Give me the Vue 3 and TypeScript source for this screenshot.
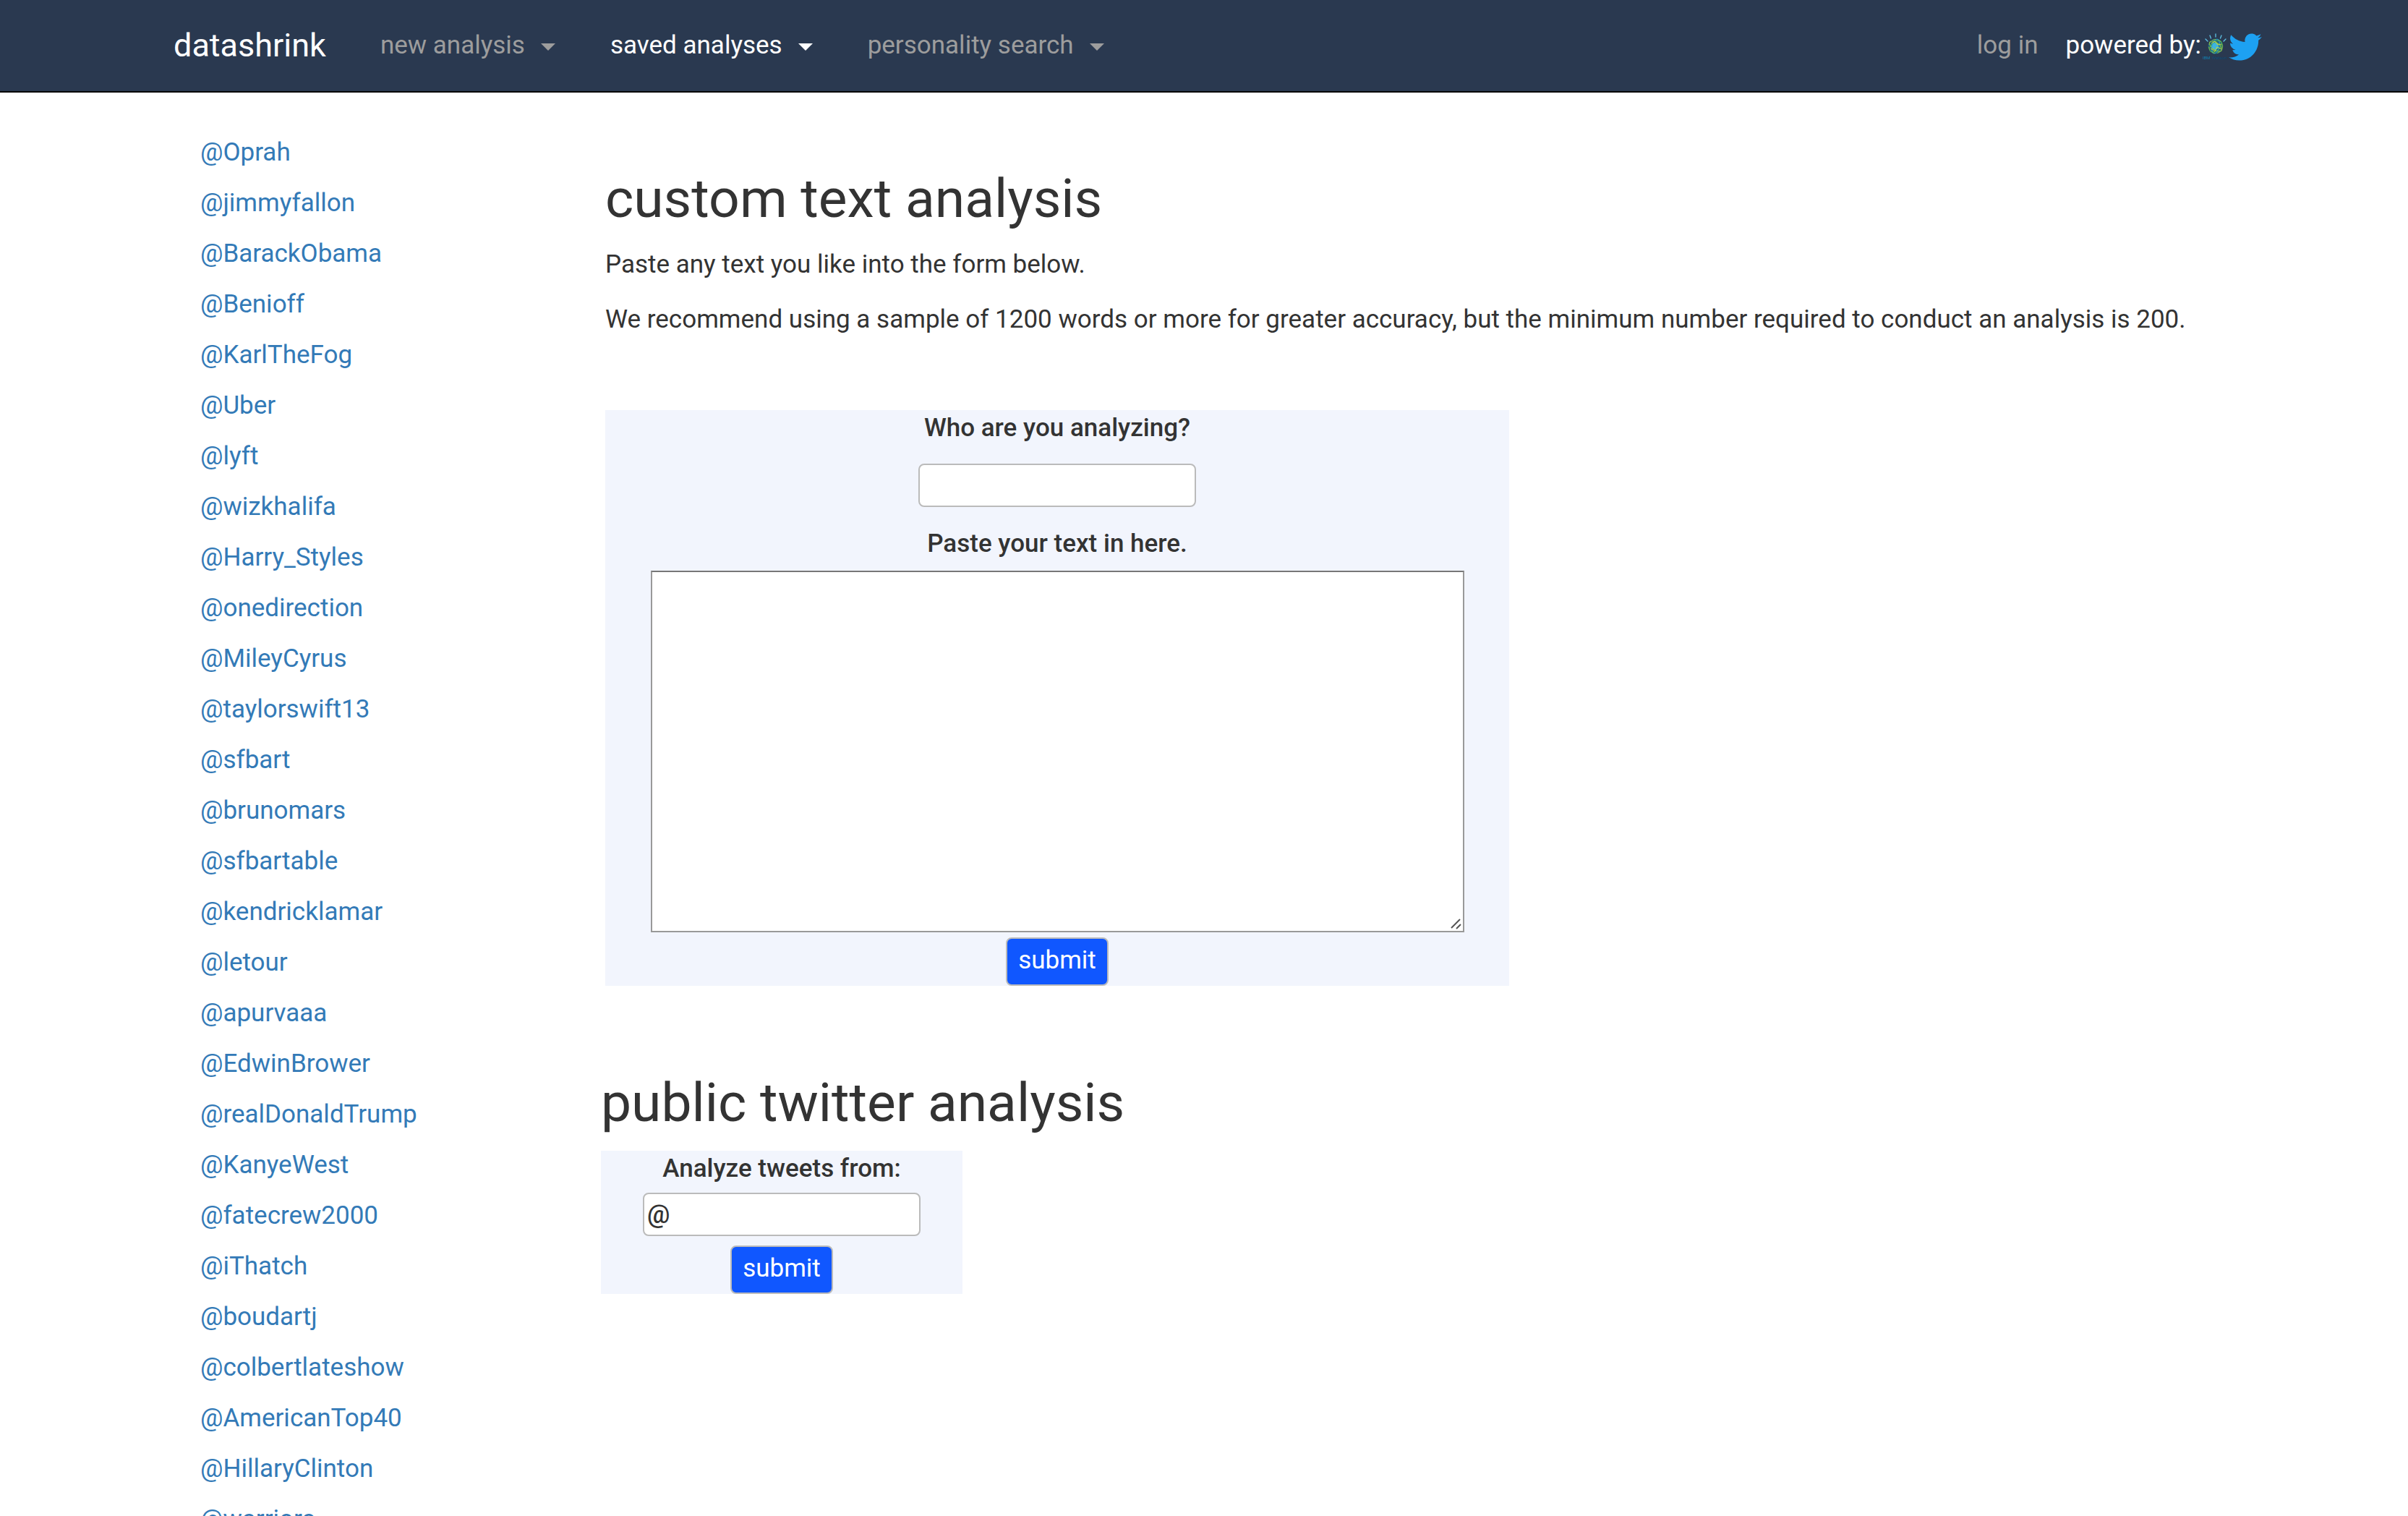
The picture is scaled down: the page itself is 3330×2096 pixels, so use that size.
<script setup lang="ts">
import { ref } from 'vue'

interface NavItem {
  label: string
  active: boolean
}

const navItems: NavItem[] = [
  { label: 'new analysis', active: false },
  { label: 'saved analyses', active: true },
  { label: 'personality search', active: false },
]

const handles: string[] = [
  'Oprah', 'jimmyfallon', 'BarackObama', 'Benioff', 'KarlTheFog', 'Uber', 'lyft',
  'wizkhalifa', 'Harry_Styles', 'onedirection', 'MileyCyrus', 'taylorswift13',
  'sfbart', 'brunomars', 'sfbartable', 'kendricklamar', 'letour', 'apurvaaa',
  'EdwinBrower', 'realDonaldTrump', 'KanyeWest', 'fatecrew2000', 'iThatch',
  'boudartj', 'colbertlateshow', 'AmericanTop40', 'HillaryClinton', 'warriors',
]

const subject = ref('')
const sample = ref('')
const handle = ref('@')
</script>

<template>
  <div class="page">
    <header class="navbar">
      <a class="brand" href="#">datashrink</a>
      <nav class="menu">
        <a
          v-for="item in navItems"
          :key="item.label"
          href="#"
          class="nav-link"
          :class="{ active: item.active }"
        >{{ item.label }}<span class="caret"></span></a>
      </nav>
      <div class="session">
        <a class="nav-link" href="#">log in</a>
        <div class="powered">
          <span>powered by:</span>
          <svg class="watson" viewBox="0 0 36 38" aria-hidden="true">
            <g stroke="#5fc3e6" stroke-width="1.3" stroke-linecap="round">
              <path d="M4 8l3 3M10 3l1.500 4M18 1v4M26 3l-1.500 4M32 8l-3 3" />
            </g>
            <circle cx="18" cy="18" r="10.500" fill="#1f5f7c" />
            <circle cx="17" cy="18" r="5" fill="#3fb4dc" />
            <g fill="none" stroke-width="1">
              <ellipse cx="18" cy="18" rx="10" ry="5" stroke="#a6ce39" transform="rotate(35 18 18)" />
              <ellipse cx="18" cy="18" rx="10" ry="6" stroke="#4fae4e" transform="rotate(-40 18 18)" />
              <ellipse cx="18" cy="18" rx="5" ry="10" stroke="#2a9fd0" transform="rotate(15 18 18)" />
              <circle cx="18" cy="18" r="9.500" stroke="#7fb83f" stroke-dasharray="5 3" />
              <path d="M12 14l5-3 4 5 5-1M11 21l6 4 3-6 6 3" stroke="#c9dc3a" />
            </g>
            <text x="0" y="36" font-size="6" fill="#0f7fae">IBM</text>
            <text x="13" y="36" font-size="6" fill="#0c4a74">Watson</text>
          </svg>
          <svg class="twitter" viewBox="0 2 24 20" aria-hidden="true">
            <path fill="#1da1f2" d="M23.953 4.570a10 10 0 0 1-2.825.775 4.958 4.958 0 0 0 2.163-2.723c-.951.555-2.005.959-3.127 1.184a4.920 4.920 0 0 0-8.384 4.482C7.690 8.095 4.067 6.130 1.640 3.162a4.822 4.822 0 0 0-.666 2.475c0 1.710.870 3.213 2.188 4.096a4.904 4.904 0 0 1-2.228-.616v.060a4.923 4.923 0 0 0 3.946 4.827 4.996 4.996 0 0 1-2.212.085 4.936 4.936 0 0 0 4.604 3.417 9.867 9.867 0 0 1-6.102 2.105c-.390 0-.779-.023-1.170-.067a13.995 13.995 0 0 0 7.557 2.209c9.053 0 13.998-7.496 13.998-13.985 0-.210 0-.420-.015-.630A9.935 9.935 0 0 0 24 4.590z" />
          </svg>
        </div>
      </div>
    </header>

    <div class="content">
      <ul class="handles">
        <li v-for="name in handles" :key="name"><a href="#">@{{ name }}</a></li>
      </ul>

      <main class="main">
        <section class="custom">
          <h1>custom text analysis</h1>
          <div class="intro">
            <p>Paste any text you like into the form below.</p>
            <p>We recommend using a sample of 1200 words or more for greater accuracy, but the minimum number required to conduct an analysis is 200.</p>
          </div>
          <form class="panel wide" @submit.prevent>
            <label for="subject">Who are you analyzing?</label>
            <input id="subject" v-model="subject" type="text" />
            <label for="sample">Paste your text in here.</label>
            <div class="sample-box">
              <textarea id="sample" v-model="sample"></textarea>
              <svg class="grip" viewBox="0 0 16 16" aria-hidden="true">
                <path d="M2 14L14 2M9 15l6-6" stroke="#555" stroke-width="2" fill="none" />
              </svg>
            </div>
            <button type="submit">submit</button>
          </form>
        </section>

        <section class="tweets">
          <h1>public twitter analysis</h1>
          <form class="panel narrow" @submit.prevent>
            <label for="handle">Analyze tweets from:</label>
            <input id="handle" v-model="handle" type="text" />
            <button type="submit">submit</button>
          </form>
        </section>
      </main>
    </div>
  </div>
</template>

<style>
body {
  margin: 0;
  background: #fff;
}
</style>

<style scoped>
.page {
  box-sizing: border-box;
  height: 100vh;
  overflow-y: auto;
  scrollbar-width: none;
  font-family: Roboto, "Liberation Sans", sans-serif;
  font-size: 35px;
  color: #333;
}

a {
  text-decoration: none;
}

.navbar {
  display: flex;
  align-items: center;
  box-sizing: border-box;
  height: 128px;
  padding: 0 202px 2px 240px;
  background: #2a3950;
  border-bottom: 2px solid #080808;
  color: #fff;
}

.brand {
  margin-right: 75px;
  font-size: 45px;
  color: #fff;
}

.menu {
  display: flex;
  gap: 76px;
}

.nav-link {
  display: flex;
  align-items: center;
  gap: 22px;
  color: #9d9d9d;
}

.nav-link.active {
  color: #fff;
}

.caret {
  margin-top: 6px;
  border-top: 10px solid currentColor;
  border-left: 10px solid transparent;
  border-right: 10px solid transparent;
}

.session {
  display: flex;
  gap: 38px;
  margin-left: auto;
}

.powered {
  display: flex;
  align-items: center;
}

.watson,
.twitter {
  height: 38px;
  margin-top: 6px;
}

.watson {
  width: 36px;
  margin-left: 2px;
}

.twitter {
  width: 46px;
}

.content {
  display: flex;
}

.handles {
  flex: 0 0 554px;
  margin: 0;
  padding: 48px 0 0 277px;
  list-style: none;
  line-height: 70px;
}

.handles a {
  color: #337ab7;
}

.main {
  flex: 1;
  min-width: 0;
  padding: 104px 40px 0 0;
}

.custom {
  padding-left: 6px;
}

h1 {
  margin: 0;
  font-size: 75px;
  font-weight: 400;
  line-height: 84px;
}

.intro {
  display: flex;
  flex-direction: column;
  gap: 24px;
  margin-top: 24px;
}

.intro p {
  margin: 0;
  line-height: 52px;
}

.panel {
  display: flex;
  flex-direction: column;
  align-items: center;
  max-width: 100%;
  background: #f2f5fd;
}

.panel label {
  font-weight: 500;
  line-height: 50px;
}

.panel input {
  box-sizing: border-box;
  width: 384px;
  height: 60px;
  padding: 0 4px;
  border: 2px solid #bbb;
  border-radius: 8px;
  background: #fff;
  color: #333;
  font: inherit;
  font-weight: 500;
}

.panel button {
  height: 67px;
  padding: 0 15px 4px;
  border: 2px solid #bbb;
  border-radius: 8px;
  background: #1057ff;
  color: #fff;
  font: inherit;
}

.wide {
  width: 1250px;
  margin-top: 99px;
}

.wide input {
  margin: 24px 0 26px;
}

.sample-box {
  position: relative;
  width: 90%;
  margin: 12px 0 7px;
}

.sample-box textarea {
  display: block;
  box-sizing: border-box;
  width: 100%;
  height: 500px;
  padding: 4px;
  border: 2px solid #999;
  border-top-color: #777;
  border-radius: 0;
  background: #fff;
  color: #333;
  font: inherit;
  resize: none;
}

.grip {
  position: absolute;
  right: 4px;
  bottom: 4px;
  width: 16px;
  height: 16px;
}

.tweets {
  margin-top: 119px;
}

.narrow {
  width: 500px;
  margin-top: 25px;
}

.narrow input {
  margin: 8px 0 13px;
}
</style>
